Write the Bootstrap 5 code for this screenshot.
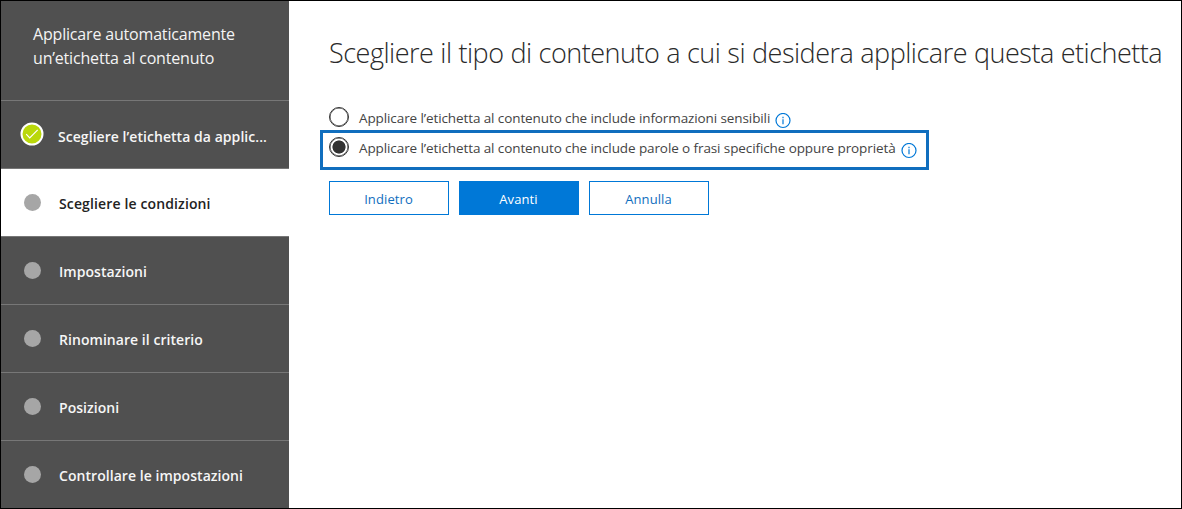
<!DOCTYPE html>
<html lang="it">
<head>
<meta charset="utf-8">
<meta name="viewport" content="width=device-width, initial-scale=1">
<title>Applicare automaticamente un’etichetta al contenuto</title>
<link href="https://cdn.jsdelivr.net/npm/bootstrap@5.3.0/dist/css/bootstrap.min.css" rel="stylesheet">
<style>
body{font-family:"Open Sans","Noto Sans",sans-serif;color:#333;background:#fff}
.wizard{height:509px;border:1px solid #000}
.side{width:288px;background:#505050}
.side-head{height:100px;padding:21px 32px 0;font-size:16px;line-height:24px;letter-spacing:-.18px;border-bottom:1px solid #777;color:#f4f4f4}
.side-head span{display:block;white-space:nowrap}
.step{height:68px;border-bottom:1px solid #777;color:#f6f6f6;font-size:14px;font-weight:600;line-height:20px;letter-spacing:.05px;white-space:nowrap}
.step:last-child{border-bottom-color:#505050;height:67px}
.step.current{background:#fff;color:#222;letter-spacing:.13px}
.step.done .step-label{margin-left:-1px;padding-top:5px}
.step.done svg{margin:-1px 1px 0 0}
.step-mark{width:58px;flex:none;padding-left:5px;height:67px}
.step-label{padding-top:3px}
.dot{width:17px;height:17px;border-radius:50%;background:#a6a6a6}
.content-pane{padding:31px 0 0 40px}
h1{font-size:27px;line-height:42px;font-weight:300;letter-spacing:-.49px;word-spacing:.4px;white-space:nowrap;margin:0 0 25px;color:#2a2a2a}
.choice{height:31px;font-size:13.5px;line-height:20px;letter-spacing:-.1px;white-space:nowrap;color:#444}
.choice .form-check-input{width:20px;height:20px;border:1px solid #333;box-shadow:inset 0 0 0 .5px #333;margin:0;background-color:#fff;flex:none}
.choice .form-check-input:checked{background-image:radial-gradient(circle,#333 6.2px,transparent 6.9px);background-size:auto}
.choice label{margin:1px 0 0 10px}
.choice svg{margin:6px 0 0 5px;flex:none}
.marked{margin:0 0 11px -9px;width:609px;height:40px;border:3px solid #106ebe;padding:4px 0 0 6px}
.wbtn{width:120px;height:34px;border-radius:0;font-size:13px;letter-spacing:.1px;padding:2px 1px 0 0;line-height:20px;color:#106ebe;border:1px solid #0078d7;background:#fff}
.wbtn.go{background:#0078d7;color:#fff}
.acts{gap:10px}
</style>
</head>
<body>
<div class="wizard d-flex">
  <nav class="side flex-shrink-0">
    <div class="side-head"><span>Applicare automaticamente</span><span>un’etichetta al contenuto</span></div>
    <div class="step done d-flex align-items-center"><div class="step-mark d-flex align-items-center justify-content-center"><svg width="24" height="24" viewBox="0 0 24 24"><circle cx="12" cy="12" r="10.5" fill="#bad80a" stroke="#fff" stroke-width="2"/><path d="M6.2 12.2l3.5 3.7 8-8" fill="none" stroke="#fff" stroke-width="1.2"/></svg></div><span class="step-label">Scegliere l’etichetta da applic...</span></div>
    <div class="step current d-flex align-items-center"><div class="step-mark d-flex align-items-center justify-content-center"><i class="dot"></i></div><span class="step-label">Scegliere le condizioni</span></div>
    <div class="step d-flex align-items-center"><div class="step-mark d-flex align-items-center justify-content-center"><i class="dot"></i></div><span class="step-label">Impostazioni</span></div>
    <div class="step d-flex align-items-center"><div class="step-mark d-flex align-items-center justify-content-center"><i class="dot"></i></div><span class="step-label">Rinominare il criterio</span></div>
    <div class="step d-flex align-items-center"><div class="step-mark d-flex align-items-center justify-content-center"><i class="dot"></i></div><span class="step-label">Posizioni</span></div>
    <div class="step d-flex align-items-center"><div class="step-mark d-flex align-items-center justify-content-center"><i class="dot"></i></div><span class="step-label">Controllare le impostazioni</span></div>
  </nav>
  <main class="content-pane flex-grow-1">
    <h1>Scegliere il tipo di contenuto a cui si desidera applicare questa etichetta</h1>
    <div class="choice d-flex align-items-start pt-2">
      <input class="form-check-input" type="radio" name="kind" id="r1"><label for="r1">Applicare l’etichetta al contenuto che include informazioni sensibili</label>
      <svg width="16" height="16" viewBox="0 0 16 16" fill="none" stroke="#0078d7"><circle cx="8" cy="7.5" r="7" stroke-width="1.2"/><path d="M8 6.3v5M8 3.8v1.4" stroke-width="1.2"/></svg>
    </div>
    <div class="choice marked d-flex align-items-start">
      <input class="form-check-input" type="radio" name="kind" id="r2" checked><label for="r2">Applicare l’etichetta al contenuto che include parole o frasi specifiche oppure proprietà</label>
      <svg width="16" height="16" viewBox="0 0 16 16" fill="none" stroke="#0078d7"><circle cx="8" cy="7.5" r="7" stroke-width="1.2"/><path d="M8 6.3v5M8 3.8v1.4" stroke-width="1.2"/></svg>
    </div>
    <div class="d-flex acts"><button class="btn wbtn">Indietro</button><button class="btn wbtn go">Avanti</button><button class="btn wbtn">Annulla</button></div>
  </main>
</div>
<script src="https://cdn.jsdelivr.net/npm/bootstrap@5.3.0/dist/js/bootstrap.bundle.min.js"></script>
</body>
</html>
